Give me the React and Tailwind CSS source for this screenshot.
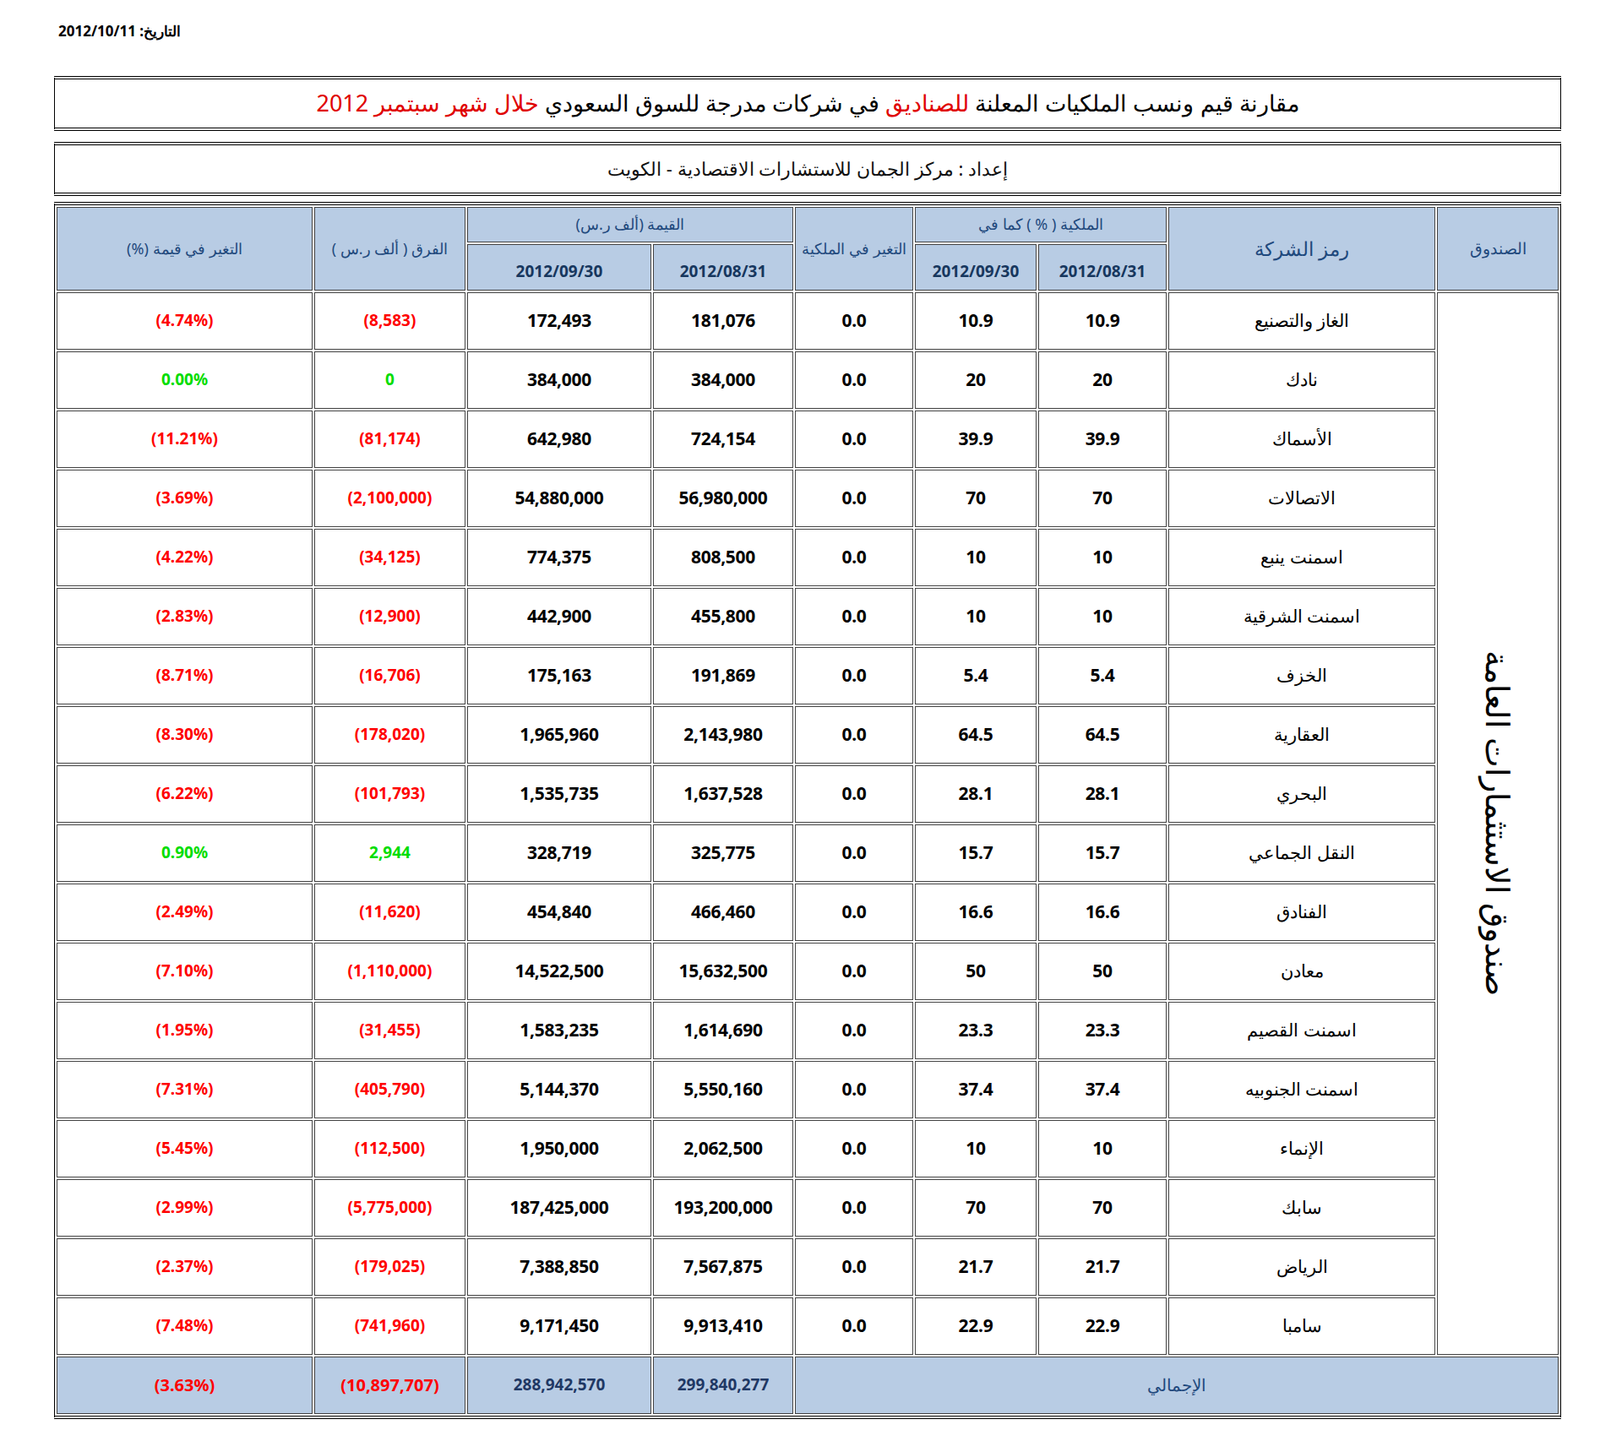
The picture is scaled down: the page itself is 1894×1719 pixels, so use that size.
const rows = [
  ['الغاز والتصنيع', '10.9', '10.9', '181,076', '172,493', '(8,583)', '(4.74%)', 'r'],
  ['نادك', '20', '20', '384,000', '384,000', '0', '0.00%', 'g'],
  ['الأسماك', '39.9', '39.9', '724,154', '642,980', '(81,174)', '(11.21%)', 'r'],
  ['الاتصالات', '70', '70', '56,980,000', '54,880,000', '(2,100,000)', '(3.69%)', 'r'],
  ['اسمنت ينبع', '10', '10', '808,500', '774,375', '(34,125)', '(4.22%)', 'r'],
  ['اسمنت الشرقية', '10', '10', '455,800', '442,900', '(12,900)', '(2.83%)', 'r'],
  ['الخزف', '5.4', '5.4', '191,869', '175,163', '(16,706)', '(8.71%)', 'r'],
  ['العقارية', '64.5', '64.5', '2,143,980', '1,965,960', '(178,020)', '(8.30%)', 'r'],
  ['البحري', '28.1', '28.1', '1,637,528', '1,535,735', '(101,793)', '(6.22%)', 'r'],
  ['النقل الجماعي', '15.7', '15.7', '325,775', '328,719', '2,944', '0.90%', 'g'],
  ['الفنادق', '16.6', '16.6', '466,460', '454,840', '(11,620)', '(2.49%)', 'r'],
  ['معادن', '50', '50', '15,632,500', '14,522,500', '(1,110,000)', '(7.10%)', 'r'],
  ['اسمنت القصيم', '23.3', '23.3', '1,614,690', '1,583,235', '(31,455)', '(1.95%)', 'r'],
  ['اسمنت الجنوبيه', '37.4', '37.4', '5,550,160', '5,144,370', '(405,790)', '(7.31%)', 'r'],
  ['الإنماء', '10', '10', '2,062,500', '1,950,000', '(112,500)', '(5.45%)', 'r'],
  ['سابك', '70', '70', '193,200,000', '187,425,000', '(5,775,000)', '(2.99%)', 'r'],
  ['الرياض', '21.7', '21.7', '7,567,875', '7,388,850', '(179,025)', '(2.37%)', 'r'],
  ['سامبا', '22.9', '22.9', '9,913,410', '9,171,450', '(741,960)', '(7.48%)', 'r'],
];

const AR = "font-['Liberation_Sans','DejaVu_Sans',sans-serif]";
const NUM = "font-['DejaVu_Sans',Verdana,sans-serif]";
const cell = 'border border-[#444] p-0 text-center align-middle';
const hd = 'border border-[#444] p-0 text-center align-middle bg-[#b8cce4] text-[#1f497d]';
const val = `${cell} ${NUM} text-[21px] font-bold text-black tracking-[-0.3px]`;

export default function App() {
  return (
    <div className="w-[1894px] h-[1719px] bg-white">
      <div className="pl-[69px] pt-[24px]">
        <div dir="rtl" className={`inline-block text-[17px] font-bold text-black ${AR}`}>
          التاريخ: <span className={NUM}>2012/10/11</span>
        </div>
      </div>
      <div className="ml-[64px] w-[1784px] mt-[40px]">
        <div dir="rtl" className={`h-[65px] border-y-[4px] border-x border-double border-black flex items-center justify-center text-[27px] text-black ${AR}`}>
          <span>
            مقارنة قيم ونسب الملكيات المعلنة <span className="text-[#e00000]">للصناديق</span> في شركات مدرجة للسوق السعودي <span className="text-[#e00000]">خلال شهر سبتمبر 2012</span>
          </span>
        </div>
        <div dir="rtl" className={`mt-[13px] h-[64px] border-y-[4px] border-x border-double border-black flex items-center justify-center text-[22px] text-[#111] ${AR}`}>
          إعداد : مركز الجمان للاستشارات الاقتصادية - الكويت
        </div>
        <table dir="rtl" className="mt-[7px] w-[1784px] box-border table-fixed border-separate border-spacing-[2px] border-y-[4px] border-x border-double border-black">
          <colgroup>
            <col className="w-[144px]" />
            <col className="w-[316px]" />
            <col className="w-[152px]" />
            <col className="w-[144px]" />
            <col className="w-[140px]" />
            <col className="w-[166px]" />
            <col className="w-[218px]" />
            <col className="w-[179px]" />
            <col />
          </colgroup>
          <thead>
            <tr className="h-[42px]">
              <th rowSpan={2} className={`${hd} ${AR} font-normal text-[19px]`}>الصندوق</th>
              <th rowSpan={2} className={`${hd} ${AR} font-normal text-[23px]`}>رمز الشركة</th>
              <th colSpan={2} className={`${hd} ${AR} font-normal text-[18px]`}>الملكية ( % ) كما في</th>
              <th rowSpan={2} className={`${hd} ${AR} font-normal text-[18px]`}>التغير في الملكية</th>
              <th colSpan={2} className={`${hd} ${AR} font-normal text-[18px]`}>القيمة (ألف ر.س)</th>
              <th rowSpan={2} className={`${hd} ${AR} font-normal text-[18px]`}>الفرق ( ألف ر.س )</th>
              <th rowSpan={2} className={`${hd} ${AR} font-normal text-[18px]`}>التغير في قيمة (%)</th>
            </tr>
            <tr className="h-[55px]">
              {['2012/08/31', '2012/09/30', '2012/08/31', '2012/09/30'].map((d, i) => (
                <th key={i} className={`${hd} ${NUM} font-bold text-[19px] text-[#17375e] pt-[10px]`}>{d}</th>
              ))}
            </tr>
          </thead>
          <tbody>
            {rows.map((r, i) => {
              const c = r[7] === 'g' ? 'text-[#00dd00]' : 'text-[#ff0000]';
              return (
                <tr key={i} className="h-[68px]">
                  {i === 0 && (
                    <td rowSpan={rows.length} className={cell}>
                      <div className="flex justify-center">
                        <span className={`text-[38px] text-black [writing-mode:vertical-rl] ${AR}`}>صندوق الاستثمارات العامة</span>
                      </div>
                    </td>
                  )}
                  <td className={`${cell} ${AR} text-[21px] text-black`}>{r[0]}</td>
                  <td className={val}>{r[1]}</td>
                  <td className={val}>{r[2]}</td>
                  <td className={val}>0.0</td>
                  <td className={val}>{r[3]}</td>
                  <td className={val}>{r[4]}</td>
                  <td className={`${cell} ${NUM} text-[19px] font-bold ${c}`}><span dir="ltr">{r[5]}</span></td>
                  <td className={`${cell} ${NUM} text-[19px] font-bold ${c}`}><span dir="ltr">{r[6]}</span></td>
                </tr>
              );
            })}
            <tr className="h-[68px]">
              <td colSpan={5} className={`${hd} ${AR} text-[20px]`}>الإجمالي</td>
              <td className={`${hd} ${NUM} text-[19px] font-bold text-[#1f3864]`}>299,840,277</td>
              <td className={`${hd} ${NUM} text-[19px] font-bold text-[#1f3864]`}>288,942,570</td>
              <td className={`${hd} ${NUM} text-[20px] font-bold text-[#ff0000]`}><span dir="ltr">(10,897,707)</span></td>
              <td className={`${hd} ${NUM} text-[20px] font-bold text-[#ff0000]`}><span dir="ltr">(3.63%)</span></td>
            </tr>
          </tbody>
        </table>
      </div>
    </div>
  );
}
